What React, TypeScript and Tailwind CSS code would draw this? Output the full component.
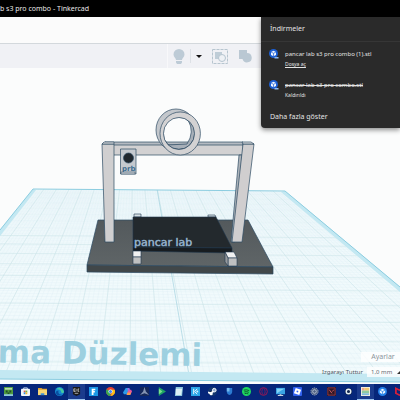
import React from 'react'

const downloads = [
  { id: 1, name: 'pancar lab s3 pro combo (1).stl', removed: false },
  { id: 2, name: 'pancar lab s3 pro combo.stl', removed: true },
]

// the grid lines all run to one vanishing point
const VX = 134
const VY = 63
const columns = Array.from({ length: 20 }, (_, i) => -0.714 + i * 0.1)
const fineColumns = Array.from({ length: 100 }, (_, i) => -0.794 + i * 0.02)
const rows = Array.from({ length: 17 }, (_, i) => VY + 1 / (0.00334 + i * 0.00027))
const fineRows = Array.from({ length: 85 }, (_, i) => VY + 1 / (0.0033 + i * 0.000054))

const apps = [
  {
    name: 'Minecraft',
    icon: (
      <>
        <path fill="#4f9b3d" d="M0 0h10v10H0z" />
        <path fill="#b9d9a8" d="M1 1h8v2H1z" />
        <path fill="#1f4d2b" d="M2 4h2v2H2zM6 4h2v2H6zM4 6h2v2H4z" />
        <path fill="#8cc6d9" d="M0 8h10v2H0z" />
      </>
    ),
  },
  {
    name: 'Store',
    icon: (
      <>
        <path fill="none" stroke="#cfe3f5" d="M3 3V1h4v2" />
        <rect y="2" width="10" height="8" rx="1" fill="#f3f6fa" />
        <path fill="#e2574c" d="M3 4h2v2H3z" />
        <path fill="#6fb544" d="M5 4h2v2H5z" />
        <path fill="#2f8fe0" d="M3 6h2v2H3z" />
        <path fill="#f3b62b" d="M5 6h2v2H5z" />
      </>
    ),
  },
  {
    name: 'Dosya Gezgini',
    icon: (
      <>
        <path fill="#d99a2b" d="M0 1h4l1 1h5v7H0z" />
        <path fill="#f8d775" d="M0 3h10v6H0z" />
        <path fill="#3c8fd6" d="M3 7h4v2H3z" />
      </>
    ),
  },
  {
    name: 'Edge',
    icon: (
      <>
        <circle cx="5" cy="5" r="5" fill="#1789d0" />
        <path fill="#45c8a0" d="M1 3a5 5 0 0 1 9 2c0 2-2 2-3 1 0-3-4-4-6-3z" />
        <path fill="#0a4fa3" d="M4 4c-1 3 1 5 4 4-3 3-7 1-7-2 0-1 1-2 3-2z" />
      </>
    ),
  },
  {
    name: 'Epic Games',
    active: true,
    icon: (
      <>
        <path fill="#191919" d="M1 0h8v8l-4 2-4-2z" />
        <path stroke="#d8d8d8" strokeWidth=".8" fill="none" d="M4 2H2v3h2M2 3.500h2M5.500 2v3M8 2H7v3h1M3 7h4" />
      </>
    ),
  },
  {
    name: 'Fortnite',
    icon: (
      <>
        <path fill="#1b96e6" d="M0 0h10v10H0z" />
        <path fill="#fff" d="M3 2h4v1.500H5v1h1.500V6H5v3H3z" />
      </>
    ),
  },
  {
    name: 'Chrome',
    icon: (
      <>
        <circle cx="5" cy="5" r="5" fill="#e34133" />
        <path fill="#38a852" d="M.7 2.500 5 5v5A5 5 0 0 1 .7 2.500z" />
        <path fill="#fbc116" d="M5 3h4.600A5 5 0 0 1 5 10l2-4z" />
        <circle cx="5" cy="5" r="2.300" fill="#fff" />
        <circle cx="5" cy="5" r="1.700" fill="#4285f4" />
      </>
    ),
  },
  {
    name: 'Copilot',
    icon: (
      <>
        <path fill="#2c9be8" d="M3 1h4L5 8H1L0 6z" />
        <path fill="#e9559c" d="M6 3h3l1 2-2 4H4z" />
        <path fill="#f6a04a" d="M5 6h4L8 9H4z" />
        <path fill="#a26be0" d="M5 1h2l1 3H5z" />
      </>
    ),
  },
  {
    name: 'Assetto',
    icon: (
      <>
        <path fill="#16285a" d="M0 0h10v10H0z" />
        <path fill="#8594b3" d="M5 0 6.500 5 10 9 5 7 0 9l3.500-4z" />
      </>
    ),
  },
  {
    name: 'Play Games',
    icon: (
      <>
        <path fill="#1fa463" d="M2 0 10 5 2 10z" />
        <path fill="#7de08f" d="M2 2 6 5 2 8z" />
      </>
    ),
  },
  {
    name: 'Not Defteri',
    icon: (
      <>
        <path fill="#8fc7dd" d="M2 0h8L9 10H1z" />
        <path fill="#dceff5" d="M2 2h7L8 9H2z" />
      </>
    ),
  },
  {
    name: 'Kamera',
    icon: (
      <>
        <path fill="#2aa5e8" d="M0 0h10v10H0z" />
        <path stroke="#fff" fill="none" d="M3 2v6M7 2 4 5l3 3" />
        <path fill="#d6f1ff" d="M6 4h2v2H6z" />
      </>
    ),
  },
  {
    name: 'Steam',
    icon: (
      <>
        <circle cx="5" cy="5" r="5" fill="#14366f" />
        <path stroke="#fff" strokeWidth="2" d="M0 6 3 7 7 4" />
        <circle cx="7" cy="3.500" r="2" fill="#8fa6cc" stroke="#fff" />
        <circle cx="3.500" cy="7.500" r="1.800" fill="#fff" />
      </>
    ),
  },
  {
    name: 'Güvenlik',
    icon: (
      <>
        <path fill="#2c7bd1" d="M2 1h6v4c0 2-1 3-3 4C3 8 2 7 2 5z" />
        <path fill="#73b8ee" d="M2 1h3v4H2z" />
      </>
    ),
  },
  {
    name: 'Spotify',
    icon: (
      <>
        <circle cx="5" cy="5" r="5" fill="#1ed760" />
        <path fill="none" stroke="#0c4f2b" d="M2 3.500q3-1 6 .5M2.500 5.500q3-1 5 .5M3 7.300q2-.6 4 .4" />
      </>
    ),
  },
  {
    name: 'Opera GX',
    icon: (
      <>
        <circle cx="5" cy="5" r="4.300" fill="none" stroke="#a3174f" />
        <ellipse cx="5" cy="5" rx="1.800" ry="3.500" fill="none" stroke="#7c1a5c" />
      </>
    ),
  },
  {
    name: 'Bilgisayar',
    icon: (
      <>
        <path fill="#3aa4e4" d="M0 1h10v7H0z" />
        <path fill="#84d3f6" d="M1 2h8L1 7z" />
        <path fill="#c8d4e0" d="M4 8h2v1h2v1H2V9h2z" />
      </>
    ),
  },
  {
    name: 'Roblox',
    icon: (
      <>
        <rect width="10" height="10" rx="1" fill="#3161ee" />
        <path fill="#fff" d="m3 1 6 2-2 6-6-2z" />
        <path fill="#3161ee" d="m4.300 4 1.700.5-.5 1.600-1.700-.5z" />
      </>
    ),
  },
  {
    name: 'Ayarlar',
    icon: (
      <>
        <circle cx="5" cy="5" r="4" fill="#4d5f83" stroke="#a2afc4" strokeDasharray="1.500 1" />
        <circle cx="5" cy="5" r="2" fill="none" stroke="#bac5d5" />
      </>
    ),
  },
  {
    name: 'Valorant',
    icon: (
      <>
        <path fill="#301725" d="M0 0h10v10H0z" />
        <path fill="none" stroke="#a8434f" strokeWidth=".8" d="M1 1h8v8H1z" />
        <path fill="none" stroke="#d9626c" d="M2.500 3l3 4M7.500 3 6 5" />
      </>
    ),
  },
  {
    name: 'Medal',
    icon: (
      <>
        <circle cx="5" cy="5" r="4" fill="#12264e" />
        <circle cx="5" cy="5" r="2.500" fill="none" stroke="#e4edf5" strokeWidth="1.600" />
      </>
    ),
  },
  {
    name: 'Tinkercad',
    active: true,
    icon: (
      <>
        <path fill="#f4f0df" d="M0 0h10v10H0z" />
        <path fill="#f0a58c" d="M1 1h3v3H1z" />
        <path fill="#f3c96f" d="M4 1h5v3H4z" />
        <path fill="#8fcaa0" d="M1 4h8v3H1z" />
        <path fill="#7fbbdc" d="M1 7h8v2H1z" />
      </>
    ),
  },
  {
    name: 'UltiMaker Cura',
    icon: (
      <>
        <circle cx="5" cy="5" r="5" fill="#2480e8" />
        <path fill="#e8f4ff" d="M5 2 8 3.500v3L5 8 2 6.500v-3z" />
        <path stroke="#2480e8" strokeWidth=".8" fill="none" d="m2 3.500 3 1.500 3-1.500M5 5v3" />
      </>
    ),
  },
  {
    name: 'McAfee',
    icon: <path fill="#d2203c" d="M0 0 5 2.500 10 0v7.500L5 10 0 7.500zM2 3v3.500L5 8l3-1.500V3L5 4.500z" fillRule="evenodd" />,
  },
]

const Scene = () => (
  <svg viewBox="0 68 400 316" className="block w-full" aria-hidden="true">
    <defs>
      <clipPath id="plane">
        <path d="M33 189 285 191 530 395V381L0 379-120 379z" />
      </clipPath>
      <linearGradient id="base" x1="0" y1="0" x2="0" y2="1">
        <stop offset="0" stopColor="#53595c" />
        <stop offset="1" stopColor="#5f6567" />
      </linearGradient>
    </defs>
    <path fill="#fbfcfc" d="M0 68h400v316H0z" />

    {/* work plane */}
    <path fill="#f1fafc" d="M33 189 285 191 530 395V381L-120 379z" />
    <g clipPath="url(#plane)">
      {fineColumns.map((s) => (
        <line key={s} x1={VX + s * 126} y1="189" x2={VX + s * 318} y2="381" stroke="#dceff4" strokeWidth=".3" />
      ))}
      {fineRows.map((y) => (
        <line key={y} x1="-20" y1={y - 1} x2="420" y2={y + 2} stroke="#dceff4" strokeWidth=".3" />
      ))}
      {columns.map((s) => (
        <line key={s} x1={VX + s * 126} y1="189" x2={VX + s * 318} y2="381" stroke="#c9e2e7" strokeWidth=".5" />
      ))}
      {rows.map((y, i) => (
        <line key={y} x1="-20" y1={y - 1} x2="420" y2={y + 2} stroke="#c9e2e7" strokeWidth=".5" opacity={i > 9 ? 0.2 : 1} />
      ))}
      <path stroke="#a5d3e0" strokeWidth=".7" d="M157 189 190 381" />
    </g>
    <path fill="#c3e8f2" d="M0 370 400 374V382L0 379z" />
    <path fill="#c3e8f2" d="M33 189 36 190 0 236V230zM285 191 400 287V292L281 192z" />
    <path fill="none" stroke="#8ccde0" d="M0 230 33 189 285 191 400 287M0 379 400 382" />

    <text x="202" y="366" textAnchor="end" fontSize="31" transform="rotate(1 202 366)" className="fill-[#9dd0e0] font-['DejaVu_Sans',sans-serif] font-bold">
      ma Düzlemi
    </text>

    {/* printer base */}
    <g stroke="#2d4a63" strokeWidth=".7" strokeLinejoin="round">
      <path fill="url(#base)" d="M98 220H248L273 267 87 265z" />
      <path fill="#414749" d="M87 265 273 267V274L87 272z" />

      {/* posts and beam */}
      <path fill="#b4bac1" d="M105 142H243V146H114z" />
      <path fill="#d2d1d2" d="M113 145H243V155H113z" />
      <path fill="#d0cfd0" d="M102 144H114V242H105z" />
      <path fill="#aeb4ba" d="M239 155H242L235 242H231z" />
      <path fill="#d0cecf" d="M243 144H254L242 242H232z" />
      <path fill="#dcdcdd" d="M102 144 104 142H114V144zM242 142H251L254 144H243z" />

      {/* spool */}
      <path fill="#c3c7cc" fillRule="evenodd" d="M156 130a20 21 0 1 0 40 0a20 21 0 1 0-40 0zM163 133a15.500 16 0 1 0 31 0a15.500 16 0 1 0-31 0z" />
      <path fill="#a7afb8" d="M188 120q7 12-1 24l-20 1q12 8 22 1 12-13 0-26z" />
      <path fill="#d3d2d3" fillRule="evenodd" d="M160 133.500a20.200 21.500 0 1 0 40.400 0a20.200 21.500 0 1 0-40.400 0zM163.500 133.500a15.500 16 0 1 0 31 0a15.500 16 0 1 0-31 0z" />

      {/* print head */}
      <path fill="#c5cacf" d="M120.500 149H136V174H120.500z" />
      <circle cx="128.500" cy="158" r="5" fill="#20282e" />
    </g>
    <text x="122" y="171" fontSize="7" className="fill-[#3e6d90] font-['DejaVu_Sans',sans-serif] font-bold">
      prb
    </text>
    <path fill="#c5cacf" stroke="#2d4a63" strokeWidth=".5" d="M121 172h14v2h-14z" />

    {/* bed */}
    <g stroke="#20384d" strokeWidth=".6" strokeLinejoin="round">
      <path fill="#d8e2e6" d="M134 214H141V217H134zM208 215H215L216 217H208z" />
      <path fill="#23292d" d="M133 217H216L232 248 133 247z" />
      <path fill="#171c20" d="M133 247 232 248V253L133 251z" />
      <path fill="#f1f1f1" d="M133 251H141V257H133zM225 252H234L237 258H228z" />
      <path fill="#bfc0c1" d="M133 257H141V264H133zM228 258H237V266H228z" />
      <path fill="#96999c" d="M225 252 228 258V266L225 262z" />
    </g>
    <text x="134" y="246" fontSize="11" strokeWidth=".5" className="fill-[#c3d3e0] stroke-[#7fa3c2] font-['DejaVu_Sans',sans-serif]">
      pancar lab
    </text>
  </svg>
)

const CuraIcon = () => (
  <svg viewBox="0 0 10 10" className="h-[10px] w-[10px] shrink-0" aria-hidden="true">
    <circle cx="4.500" cy="4.500" r="4.500" fill="#1c5fd4" />
    <path fill="#f0f6ff" d="M4.500 1.800 7 3v3L4.500 7.200 2 6V3z" />
    <path fill="none" stroke="#1c5fd4" strokeWidth=".7" d="M2 3l2.500 1.300L7 3M4.500 4.300v3" />
    <path fill="#8fb8ee" d="M5.500 8h4v1.500h-4z" />
  </svg>
)

const DownloadsPanel = () => (
  <section className="absolute top-[17px] right-0 w-[139px] rounded-bl-[4px] bg-[#2a2a2a] pb-[6px] text-[#e4e4e4] shadow-[0_2px_5px_rgba(0,0,0,0.45)]">
    <h2 className="flex h-[25px] items-center border-b border-[#363636] pl-[9px] text-[7px]">İndirmeler</h2>
    <ul className="flex flex-col gap-[11px] pt-[7px] pl-[8px]">
      {downloads.map((item) => (
        <li key={item.id} className="flex gap-[6px]">
          <CuraIcon />
          <div className="flex flex-col items-start whitespace-nowrap">
            <span className={item.removed ? 'text-[6px] leading-[10px] line-through' : 'text-[6px] leading-[10px]'}>{item.name}</span>
            {item.removed ? (
              <span className="text-[5px] leading-[10px]">Kaldırıldı</span>
            ) : (
              <a href="#" className="text-[5px] leading-[10px] underline underline-offset-1">Dosya aç</a>
            )}
          </div>
        </li>
      ))}
    </ul>
    <button className="mt-[12px] block pl-[9px] text-[7px] leading-[10px]">Daha fazla göster</button>
  </section>
)

const Toolbar = () => (
  <div className="flex h-[25px] items-center border-t border-[#d3d8dc] bg-[#f0f1f5]">
    <div className="h-full w-[168px] shrink-0 border-r border-[#f8f8fa]" />
    <button aria-label="Göster" className="flex w-[22px] shrink-0 justify-center">
      <svg viewBox="0 0 12 15" className="h-[15px] w-[12px]">
        <path fill="#bdcbd6" d="M6 0a5.500 5.500 0 0 1 5.500 5.500C11.500 8 9 9 9 11H3C3 9 .5 8 .5 5.500A5.500 5.500 0 0 1 6 0zM3 12h6v1.500L8 15H4l-1-1.500z" />
      </svg>
    </button>
    <button aria-label="Diğer" className="flex h-[14px] w-[16px] shrink-0 items-center justify-center border-l border-[#dde1e6]">
      <svg viewBox="0 0 6 3" className="h-[3px] w-[6px]">
        <path fill="#111" d="M0 0h6L3 3z" />
      </svg>
    </button>
    <button aria-label="Grupla" className="ml-[6px] shrink-0">
      <svg viewBox="0 0 16 15" className="h-[15px] w-[16px]">
        <path fill="none" stroke="#b7c5cf" strokeDasharray="3 1" d="M.5.5h15v14H.5z" />
        <path fill="#bfcdd7" d="M3 3h7v7H3z" />
        <circle cx="10" cy="9" r="3.500" fill="#eef1f5" stroke="#b5c4cf" />
      </svg>
    </button>
    <button aria-label="Birleştir" className="ml-[10px] shrink-0">
      <svg viewBox="0 0 14 14" className="h-[14px] w-[14px]">
        <path fill="#bac8d3" d="M1 1h8v3a4.700 4.700 0 1 1-4.500 6H1z" />
      </svg>
    </button>
  </div>
)

const App = () => {
  return (
    <div className="relative flex min-h-screen flex-col overflow-hidden bg-[#fbfcfc] font-['Noto_Sans',sans-serif]">
      <header className="h-[17px] overflow-hidden bg-black text-[7px] leading-[18px] whitespace-nowrap text-[#e8e8e8]">
        b s3 pro combo - Tinkercad
      </header>
      <div className="h-[26px] bg-[#fbfbfb]" />
      <Toolbar />

      <main className="relative">
        <Scene />
        <div className="absolute right-0 bottom-[7px] flex flex-col items-end gap-[5px] text-[7px] leading-[10px] text-[#5c6670]">
          <button className="w-[39px] bg-white/80 pl-[5px] text-center text-[#8b949c]">Ayarlar</button>
          <div className="flex items-center gap-[4px]">
            <label htmlFor="snap" className="text-[6px] text-[#4a5661]">Izgarayı Tuttur</label>
            <div className="flex w-[33px] items-center bg-white/80">
              <select id="snap" className="w-[30px] appearance-none pl-[4px] text-[6px] leading-[10px]">
                <option>1,0 mm</option>
              </select>
              <svg viewBox="0 0 3 3" className="h-[3px] w-[3px]">
                <path fill="#333" d="M0 3 3 0v3z" />
              </svg>
            </div>
          </div>
        </div>
      </main>

      <nav className="mt-auto flex h-[16px] overflow-hidden bg-[#06267a]">
        {apps.map((app) => (
          <button
            key={app.name}
            aria-label={app.name}
            className={`flex w-[17px] shrink-0 items-center justify-center border-b ${app.active ? 'border-[#9cc4ee] bg-[#1b3b8c]' : 'border-transparent'}`}
          >
            <svg viewBox="0 0 10 10" className="h-[9px] w-[9px]">{app.icon}</svg>
          </button>
        ))}
      </nav>
      <DownloadsPanel />
    </div>
  )
}

export default App
